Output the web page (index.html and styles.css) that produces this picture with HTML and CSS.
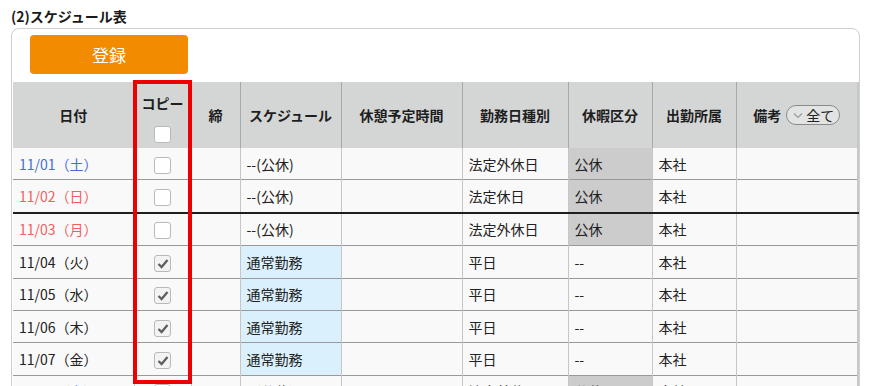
FILE: index.html
```html
<!DOCTYPE html>
<html lang="ja">
<head>
<meta charset="utf-8">
<link rel="stylesheet" href="styles.css">
</head>
<body>
<h2 class="title">(2)スケジュール表</h2>
<div class="panel">
  <button class="btn-register">登録</button>
  <div class="table-wrap">
    <table class="sched">
      <colgroup>
        <col class="c-date"><col class="c-copy"><col class="c-lock"><col class="c-sched"><col class="c-break"><col class="c-kind"><col class="c-leave"><col class="c-office"><col class="c-note">
      </colgroup>
      <thead>
        <tr>
          <th>日付</th>
          <th class="th-copy"><div class="copy-head"><span>コピー</span><span class="cb"></span></div></th>
          <th>締</th>
          <th>スケジュール</th>
          <th>休憩予定時間</th>
          <th>勤務日種別</th>
          <th>休暇区分</th>
          <th>出勤所属</th>
          <th><div class="note-head"><span>備考</span><span class="pill"><svg class="chev" width="10" height="7" viewBox="0 0 10 7"><polyline points="1,1.5 5,5.5 9,1.5" fill="none" stroke="#9a9a9a" stroke-width="1.2"/></svg><span>全て</span></span></div></th>
        </tr>
      </thead>
      <tbody>
        <tr>
          <td class="date sat">11/01（土）</td><td class="ctr"><span class="cb"></span></td><td></td><td>--(公休)</td><td></td><td>法定外休日</td><td class="leave">公休</td><td>本社</td><td></td>
        </tr>
        <tr>
          <td class="date hol">11/02（日）</td><td class="ctr"><span class="cb"></span></td><td></td><td>--(公休)</td><td></td><td>法定休日</td><td class="leave">公休</td><td>本社</td><td></td>
        </tr>
        <tr class="week-break">
          <td class="date hol">11/03（月）</td><td class="ctr"><span class="cb"></span></td><td></td><td>--(公休)</td><td></td><td>法定外休日</td><td class="leave">公休</td><td>本社</td><td></td>
        </tr>
        <tr>
          <td class="date">11/04（火）</td><td class="ctr"><span class="cb on"><svg width="12" height="11" viewBox="0 0 12 11"><polyline points="1.5,6 4.6,9 10.5,2" fill="none" stroke="#5e5e5e" stroke-width="2.3"/></svg></span></td><td></td><td class="work">通常勤務</td><td></td><td>平日</td><td>--</td><td>本社</td><td></td>
        </tr>
        <tr>
          <td class="date">11/05（水）</td><td class="ctr"><span class="cb on"><svg width="12" height="11" viewBox="0 0 12 11"><polyline points="1.5,6 4.6,9 10.5,2" fill="none" stroke="#5e5e5e" stroke-width="2.3"/></svg></span></td><td></td><td class="work">通常勤務</td><td></td><td>平日</td><td>--</td><td>本社</td><td></td>
        </tr>
        <tr>
          <td class="date">11/06（木）</td><td class="ctr"><span class="cb on"><svg width="12" height="11" viewBox="0 0 12 11"><polyline points="1.5,6 4.6,9 10.5,2" fill="none" stroke="#5e5e5e" stroke-width="2.3"/></svg></span></td><td></td><td class="work">通常勤務</td><td></td><td>平日</td><td>--</td><td>本社</td><td></td>
        </tr>
        <tr>
          <td class="date">11/07（金）</td><td class="ctr"><span class="cb on"><svg width="12" height="11" viewBox="0 0 12 11"><polyline points="1.5,6 4.6,9 10.5,2" fill="none" stroke="#5e5e5e" stroke-width="2.3"/></svg></span></td><td></td><td class="work">通常勤務</td><td></td><td>平日</td><td>--</td><td>本社</td><td></td>
        </tr>
        <tr>
          <td class="date sat">11/08（土）</td><td class="ctr"><span class="cb"></span></td><td></td><td>--(公休)</td><td></td><td>法定外休日</td><td class="leave">公休</td><td>本社</td><td></td>
        </tr>
      </tbody>
    </table>
    <div class="highlight"></div>
  </div>
</div>
</body>
</html>
```

FILE: styles.css
```css
html { overflow: hidden; }
body {
  margin: 0;
  font-family: "Noto Sans CJK JP", "Noto Sans", sans-serif;
  color: #222;
  background: #fff;
}
.title {
  margin: 0;
  padding: 6px 0 0 11px;
  height: 22px;
  font-size: 14px;
  line-height: 20px;
  font-weight: bold;
  color: #1a1a1a;
}
.panel {
  margin-left: 11px;
  width: 847px;
  border: 1px solid #cfcfcf;
  border-radius: 8px 8px 0 0;
  padding-top: 6px;
  height: 400px;
}
.btn-register {
  display: block;
  margin-left: 18px;
  width: 158px;
  height: 39px;
  border: none;
  border-radius: 4px;
  background: #f28b00;
  color: #fff;
  font-family: inherit;
  font-size: 17px;
  padding: 0;
}
.table-wrap {
  position: relative;
  margin-top: 8px;
  margin-left: 1px;
}
.sched {
  border-collapse: collapse;
  table-layout: fixed;
  width: 845px;
  font-size: 14px;
  border-right: 2px solid #c8c8c8;
}
.c-date { width: 121px; }
.c-copy { width: 57px; }
.c-lock { width: 49px; }
.c-sched { width: 101px; }
.c-break { width: 121px; }
.c-kind { width: 106px; }
.c-leave { width: 84px; }
.c-office { width: 84px; }
.c-note { width: 122px; }
.sched th {
  background: #d4d6d6;
  height: 66px;
  padding: 0;
  font-weight: bold;
  color: #1e1e1e;
  text-align: center;
  border-left: 1px solid #a9a9a9;
  line-height: 18px;
}
.sched th:first-child { border-left: none; }
.copy-head {
  display: flex;
  flex-direction: column;
  align-items: center;
  gap: 14px;
  padding-top: 12px;
  height: 66px;
  box-sizing: border-box;
}
.note-head {
  display: flex;
  align-items: center;
  justify-content: center;
  gap: 5px;
}
.pill {
  display: inline-flex;
  align-items: center;
  gap: 3px;
  height: 20px;
  box-sizing: border-box;
  border: 1px solid #8a8a8a;
  border-radius: 10px;
  padding: 0 5px 0 6px;
  font-weight: normal;
  font-size: 14px;
  color: #222;
  background: #e2e3e3;
}
.chev { display: block; }
.sched td {
  background: #f9f9f9;
  height: 31.4px;
  padding: 0 6px;
  border-top: 1px solid #999;
  border-left: 1px solid #c6c6c6;
  line-height: 18px;
  white-space: nowrap;
  overflow: hidden;
}
.sched td:first-child { border-left: none; }
.sched tbody tr:first-child td { border-top: none; }
.sched tr.week-break td { border-top: 2px solid #1e1e1e; }
.sched td.ctr { text-align: center; padding: 0; }
.sched td.work { background: #daf0fd; }
.sched td.leave { background: #cccccc; }
.date { color: #222; }
.date.sat { color: #4570cf; }
.date.hol { color: #f25f5f; }
.cb {
  display: inline-flex;
  align-items: center;
  justify-content: center;
  width: 17px;
  height: 17px;
  box-sizing: border-box;
  border: 1px solid #b9b9b9;
  border-radius: 3px;
  background: #fff;
  vertical-align: middle;
}
.cb.on { background: #f3f3f3; }
.cb svg { display: block; }
.highlight {
  position: absolute;
  left: 120px;
  top: -2px;
  width: 59px;
  height: 304px;
  box-sizing: border-box;
  border: 4px solid #ee0000;
  pointer-events: none;
}
```
